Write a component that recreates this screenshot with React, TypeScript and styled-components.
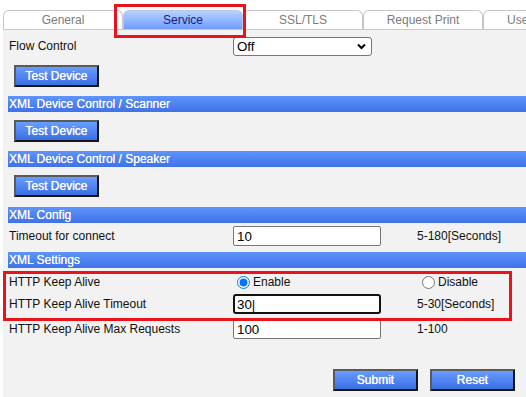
import styled, { createGlobalStyle, css } from 'styled-components';

const GlobalStyle = createGlobalStyle`
  html, body {
    margin: 0;
    padding: 0;
    background: #ffffff;
    font-family: "Liberation Sans", Arial, sans-serif;
    font-size: 12px;
    color: #111111;
  }
`;

const Page = styled.div`
  width: 526px;
  height: 397px;
  box-sizing: border-box;
  padding-left: 3px;
  display: flex;
  flex-direction: column;
  overflow: hidden;
  background: #ffffff;
`;

const TabBar = styled.div`
  display: flex;
  margin-top: 10px;
  height: 19px;
  border-bottom: 1px solid #c8c8c8;
`;

const Tab = styled.div<{ $active?: boolean }>`
  position: relative;
  flex: 0 0 120px;
  box-sizing: border-box;
  height: 19px;
  border: 1px solid #c6c6c6;
  border-bottom: none;
  border-radius: 6px 6px 0 0;
  text-align: center;
  line-height: 18px;
  color: #7c7c7c;
  background: #ffffff;

  ${({ $active }) =>
    $active &&
    css`
      z-index: 2;
      color: #1b1b7c;
      border-color: #b9c8e8;
      background: linear-gradient(#b7d2ff, #6e9dff);
      &::after {
        content: '';
        position: absolute;
        top: -7px;
        left: -10px;
        right: -4px;
        bottom: -9px;
        border: 3px solid #e8131b;
        pointer-events: none;
      }
    `}
`;

const Panel = styled.div`
  flex: 1;
  background: #f2f2f2;
  padding: 6px 0 0 5px;
`;

const Row = styled.div<{ $mt?: number }>`
  display: grid;
  grid-template-columns: 225px 184px 1fr;
  align-items: center;
  height: 20px;
  margin-top: ${({ $mt }) => $mt ?? 0}px;
`;

const Label = styled.span`
  padding-left: 1px;
`;

const Hint = styled.span`
  color: #111111;
`;

const SectionBar = styled.div<{ $mt?: number }>`
  height: 16px;
  line-height: 16px;
  margin-top: ${({ $mt }) => $mt ?? 0}px;
  padding-left: 1px;
  color: #ffffff;
  text-shadow: 0 0 0.6px #ffffff;
  background: linear-gradient(#5f94fd, #3f72e6);
`;

const ButtonRow = styled.div<{ $pt: number; $pb: number }>`
  display: flex;
  padding: ${({ $pt, $pb }) => `${$pt}px 0 ${$pb}px 6px`};
`;

const ActionButton = styled.button`
  box-sizing: border-box;
  width: 85px;
  height: 22px;
  padding: 0;
  border: 2px solid;
  border-color: #5a5a5a #161616 #161616 #5a5a5a;
  background: linear-gradient(#689dff, #3a6ee4);
  color: #ffffff;
  font-family: "Liberation Sans", Arial, sans-serif;
  font-size: 12px;
  text-shadow: 0 0 0.7px #ffffff;
  cursor: pointer;
`;

const SelectWrap = styled.div`
  position: relative;
  width: 139px;
  height: 19px;
`;

const Select = styled.select`
  appearance: none;
  box-sizing: border-box;
  width: 100%;
  height: 100%;
  margin: 0;
  padding: 0 3px;
  border: 1px solid #767676;
  border-radius: 3px;
  background: #ffffff;
  font-family: "Liberation Sans", Arial, sans-serif;
  font-size: 13.33px;
  color: #000000;
`;

const Chevron = styled.svg`
  position: absolute;
  right: 6px;
  top: 6px;
  pointer-events: none;
`;

const TextInput = styled.input<{ $focused?: boolean }>`
  box-sizing: border-box;
  width: 148px;
  height: 20px;
  margin: 0;
  padding: 1px 3px;
  border: 1px solid #767676;
  border-radius: 2px;
  background: #ffffff;
  font-family: "Liberation Sans", Arial, sans-serif;
  font-size: 13.33px;
  color: #000000;
  outline: none;

  ${({ $focused }) =>
    $focused &&
    css`
      border: 2px solid #111111;
      border-radius: 3px;
      padding: 0 2px;
    `}
`;

const RadioLabel = styled.label<{ $ml: number }>`
  display: flex;
  align-items: center;
  gap: 3px;
  margin-left: ${({ $ml }) => $ml}px;
`;

const Radio = styled.input`
  width: 13px;
  height: 13px;
  margin: 0;
  accent-color: #0075ff;
`;

const Highlight = styled.div`
  position: relative;

  &::after {
    content: '';
    position: absolute;
    top: -1px;
    left: -5px;
    right: 14px;
    bottom: -7px;
    border: 3px solid #e8131b;
    pointer-events: none;
  }
`;

const Footer = styled.div`
  display: flex;
  justify-content: flex-end;
  gap: 12px;
  margin-top: 30px;
  padding-right: 11px;
`;

const tabs = ['General', 'Service', 'SSL/TLS', 'Request Print', 'User Settings'];

export default function App() {
  return (
    <>
      <GlobalStyle />
      <Page>
        <TabBar>
          {tabs.map((t) => (
            <Tab key={t} $active={t === 'Service'}>
              {t}
            </Tab>
          ))}
        </TabBar>
        <Panel>
          <Row>
            <Label>Flow Control</Label>
            <SelectWrap>
              <Select defaultValue="Off">
                <option>Off</option>
                <option>On</option>
              </Select>
              <Chevron width="9" height="7" viewBox="0 0 9 7">
                <path d="M1 1.5 L4.5 5 L8 1.5" fill="none" stroke="#000" strokeWidth="2" />
              </Chevron>
            </SelectWrap>
          </Row>
          <ButtonRow $pt={9} $pb={9}>
            <ActionButton>Test Device</ActionButton>
          </ButtonRow>
          <SectionBar>XML Device Control / Scanner</SectionBar>
          <ButtonRow $pt={8} $pb={9}>
            <ActionButton>Test Device</ActionButton>
          </ButtonRow>
          <SectionBar>XML Device Control / Speaker</SectionBar>
          <ButtonRow $pt={8} $pb={10}>
            <ActionButton>Test Device</ActionButton>
          </ButtonRow>
          <SectionBar>XML Config</SectionBar>
          <Row $mt={3}>
            <Label>Timeout for connect</Label>
            <TextInput type="text" defaultValue="10" />
            <Hint>5-180[Seconds]</Hint>
          </Row>
          <SectionBar $mt={6}>XML Settings</SectionBar>
          <Highlight>
            <Row $mt={4}>
              <Label>HTTP Keep Alive</Label>
              <RadioLabel $ml={4}>
                <Radio type="radio" name="keepalive" defaultChecked />
                Enable
              </RadioLabel>
              <RadioLabel $ml={5}>
                <Radio type="radio" name="keepalive" />
                Disable
              </RadioLabel>
            </Row>
            <Row $mt={2}>
              <Label>HTTP Keep Alive Timeout</Label>
              <TextInput type="text" defaultValue="30|" $focused />
              <Hint>5-30[Seconds]</Hint>
            </Row>
          </Highlight>
          <Row $mt={5}>
            <Label>HTTP Keep Alive Max Requests</Label>
            <TextInput type="text" defaultValue="100" />
            <Hint>1-100</Hint>
          </Row>
          <Footer>
            <ActionButton>Submit</ActionButton>
            <ActionButton>Reset</ActionButton>
          </Footer>
        </Panel>
      </Page>
    </>
  );
}
